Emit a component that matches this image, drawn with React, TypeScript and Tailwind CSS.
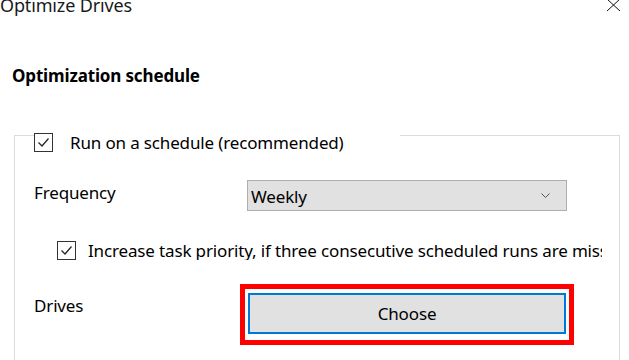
import React from 'react'

const font = { fontFamily: '"Noto Sans", "Open Sans", sans-serif' }

function Check({ className = '' }: { className?: string }) {
  return (
    <span
      className={`flex h-[19px] w-[19px] shrink-0 items-center justify-center border border-[#333333] bg-white ${className}`}
    >
      <svg width="13" height="13" viewBox="0 0 13 13" fill="none">
        <path d="M1.5 6.5 L5 10 L11.5 2.5" stroke="#222222" strokeWidth="1.2" />
      </svg>
    </span>
  )
}

export default function App() {
  return (
    <div
      className="h-[360px] w-[629px] overflow-hidden bg-white text-[17px] tracking-[-0.15px] text-black"
      style={font}
    >
      {/* Title bar, cut off at the top */}
      <div className="flex h-[20px] items-start justify-between overflow-hidden">
        <span className="-mt-[7px] text-[18px] leading-[24px] text-[#1a1a1a]">Optimize Drives</span>
        <svg width="16" height="14" viewBox="0 0 16 14" className="mr-[7px] -mt-[2px]">
          <path d="M1 1 L14 13 M14 1 L1 13" stroke="#111111" strokeWidth="1" />
        </svg>
      </div>

      <div className="mt-[45px] pl-[12px] text-[17px] font-bold leading-[22px]">
        Optimization schedule
      </div>

      {/* Group box */}
      <div className="ml-[14px] mt-[46px] w-[606px]">
        <div className="flex items-start">
          <span className="mt-[2px] h-[20px] w-[20px] border-l border-t border-[#dcdcdc]" />
          <label className="flex w-[366px] items-center gap-[17px] leading-[19px]">
            <Check />
            <span>Run on a schedule (recommended)</span>
          </label>
          <span className="mt-[2px] h-[20px] flex-1 border-r border-t border-[#dcdcdc]" />
        </div>

        <div className="h-[220px] border-x border-[#dcdcdc] pl-[19px] pr-[17px]">
          <div className="flex items-start pt-[25px]">
            <span className="mt-[1px] w-[213px] leading-[24px]">Frequency</span>
            <div className="flex h-[31px] w-[320px] items-center justify-between border border-[#adadad] bg-[#e1e1e1] pl-[3px] pr-[16px]">
              <span className="mt-[3px] leading-[24px]">Weekly</span>
              <svg width="9" height="5" viewBox="0 0 9 5">
                <path d="M0.5 0.5 L4.5 4.5 L8.5 0.5" stroke="#555555" strokeWidth="1" fill="none" />
              </svg>
            </div>
          </div>

          <div className="mt-[30px] flex items-center gap-[12px] overflow-hidden whitespace-nowrap pl-[23px] leading-[19px]">
            <Check />
            <span>Increase task priority, if three consecutive scheduled runs are missed</span>
          </div>

          <div className="mt-[24px] flex items-start">
            <span className="mt-[10px] w-[206px] leading-[24px]">Drives</span>
            <div className="border-[5px] border-[#ff0000] px-[3px] pb-[6px] pt-[4px]">
              <button className="flex h-[41px] w-[318px] items-center justify-center border-2 border-[#0078d7] bg-[#e1e1e1] leading-[24px]">
                Choose
              </button>
            </div>
          </div>
        </div>
      </div>
    </div>
  )
}
